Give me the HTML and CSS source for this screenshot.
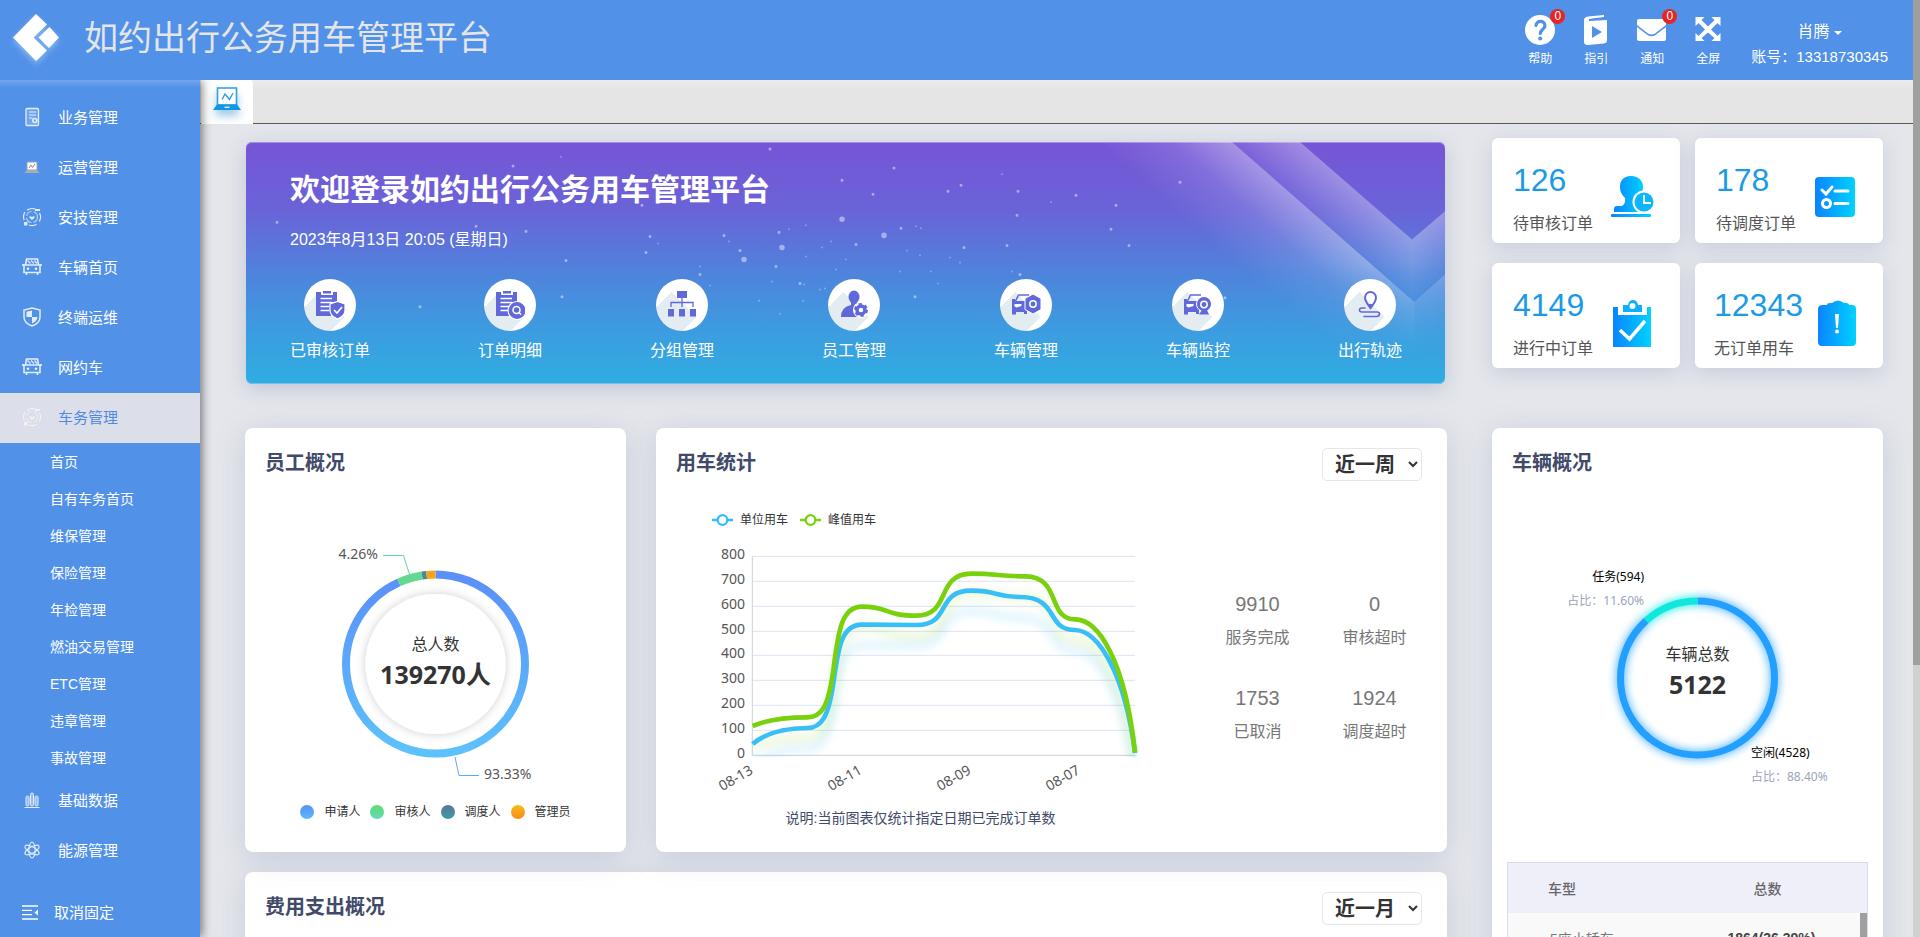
FILE: index.html
```html
<!DOCTYPE html>
<html lang="zh-CN">
<head>
<meta charset="utf-8">
<title>如约出行公务用车管理平台</title>
<link rel="stylesheet" href="styles.css">
</head>
<body>
<svg class="defs" width="0" height="0" aria-hidden="true">
  <defs>
    <linearGradient id="cyan" x1="0" y1="0" x2="1" y2="0"><stop offset="0" stop-color="#0a84ff"/><stop offset="1" stop-color="#00d2ff"/></linearGradient>
    <symbol id="i-car" viewBox="0 0 20 20"><path d="M4.500 2h11l1 6h-13zM2 8h16v7.500H2zM4.500 15.500V18M15.500 15.500V18M1 7v2M19 7v2" fill="none" stroke="currentColor" stroke-width="1.600"/><path d="M5.500 3.500l3 3M9 3.500l3 3M12.500 3.500l2.500 3" stroke="currentColor" stroke-width="1.200"/><circle cx="6" cy="11.800" r="1.300" fill="currentColor"/><circle cx="14" cy="11.800" r="1.300" fill="currentColor"/></symbol>
    <symbol id="i-orbit" viewBox="0 0 20 20"><g fill="none" stroke="currentColor" stroke-width="1.200"><path d="M5 3.200A8.500 8.500 0 0 1 15.500 3.600M17.500 6A8.500 8.500 0 0 1 17.300 14.500M14.500 17.300A8.500 8.500 0 0 1 7 18M2.200 13A8.500 8.500 0 0 1 3 5"/><circle cx="10" cy="10" r="5.500" stroke-dasharray="7 2" opacity=".7"/></g><path d="M10 13c-4-2.500-3-5 0-3 3-2 4 .5 0 3zM2 15h3.500v3.500H2z" fill="currentColor"/><path d="M13 2h5v2h-5z" fill="currentColor"/></symbol>
    <symbol id="i-clip" viewBox="0 0 30 30"><path d="M1 2h5v3h12V2h4v10h-6v14H1z" fill="#6169da"/><path d="M8 1h8v2.500H8z" fill="#6169da"/><path d="M5.500 8.500H17M5.500 12.500H17M5.500 16.500h9M5.500 20.500h9" stroke="#fff" stroke-width="1.300"/></symbol>
    <symbol id="i-suv" viewBox="0 0 30 30"><path d="M4.500 11l3-6H18M7 6.500L4.500 11" fill="none" stroke="#6169da" stroke-width="1.500"/><path d="M1 9h3v2h12v13h-3v-2H5v2.500H1z" fill="#6169da"/><path d="M3.500 14h7v2l-5 1.500-2-1z" fill="#fff"/></symbol>
  </defs>
</svg>
<div class="viewport">
<div class="app">
  <header class="topbar">
    <svg class="logo" viewBox="0 0 46 56" aria-hidden="true"><path d="M23 5L34 15.500 20.500 28.500 34 41.500 23 52 0 28.500z" fill="#fff"/><path d="M36.500 18L46 28.500 36 39 25.500 28.500z" fill="#fff"/></svg>
    <h1 class="brand">如约出行公务用车管理平台</h1>
    <nav class="tools" aria-label="工具">
      <button class="tool" type="button"><svg viewBox="0 0 30 30"><circle cx="15" cy="15" r="15" fill="#fff"/><path d="M11 10.500c0-5.500 9-5.500 9 0 0 4-4.700 4-4.700 8" fill="none" stroke="#5191e8" stroke-width="3.200" stroke-linecap="round"/><circle cx="15.200" cy="23.500" r="2" fill="#5191e8"/></svg><span class="badge">0</span><span>帮助</span></button>
      <button class="tool" type="button"><svg viewBox="0 0 30 30"><path d="M7 1.500L23 0v2L8 4v2l18-1v20q0 3-3 3.500L7 30q-4 0-4-3V5q0-3 4-3.500z" fill="#fff"/><path d="M8 5l14-1.600" stroke="#5191e8" stroke-width="1.500"/><path d="M11 11v12l10-6z" fill="#5191e8"/></svg><span>指引</span></button>
      <button class="tool" type="button"><svg viewBox="0 0 30 30"><path d="M0 10V6q0-2 2-2h25q2 0 2 2v4l-11 8.500q-3.500 2-7 0z" fill="#fff"/><path d="M0 12l10.500 8q4 2.500 8 0L29 12v12q0 2-2 2H2q-2 0-2-2z" fill="#fff"/></svg><span class="badge">0</span><span>通知</span></button>
      <button class="tool" type="button"><svg viewBox="0 0 30 30"><path d="M2.500 2h9L8.500 5l6.500 6.500L21.500 5l-3-3h9v9l-3-3L18 14.500l6.500 6.500 3-3v8h-9l3-3L15 17.500 8.500 23l3 3h-9v-8l3 3 6.500-6.500L5.500 8l-3 3z" fill="#fff"/></svg><span>全屏</span></button>
    </nav>
    <div class="user">
      <button class="user-name" type="button">肖腾 <span class="caret"></span></button>
      <div class="account">账号：13318730345</div>
    </div>
  </header>

  <div class="body">
    <aside class="sidebar">
      <a class="item" href="#"><svg viewBox="0 0 20 20"><rect x="4" y="1.500" width="12.500" height="17" rx="1" fill="#ffffff30" stroke="currentColor" stroke-width="1.300"/><path d="M7 5h7M7 8h7M7 11h3.500" stroke="currentColor"/><circle cx="12.800" cy="13.500" r="2" fill="none" stroke="currentColor" stroke-width="1.600"/></svg>业务管理</a>
      <a class="item" href="#"><svg viewBox="0 0 20 20"><path d="M5 5h10v8H5z" fill="#fff" stroke="#9aa0ae"/><path d="M7 11l2-3 1.500 2.500L13 7" fill="none" stroke="#8a90a0"/><path d="M5 13h10l2.500 3h-15z" fill="#a9abb5"/></svg>运营管理</a>
      <a class="item" href="#"><svg viewBox="0 0 20 20"><use href="#i-orbit"/></svg>安技管理</a>
      <a class="item" href="#"><svg viewBox="0 0 20 20"><use href="#i-car"/></svg>车辆首页</a>
      <a class="item" href="#"><svg viewBox="0 0 20 20"><path d="M10 1l8 2v7q0 6-8 9-8-3-8-9V3z" fill="none" stroke="currentColor" stroke-width="1.500"/><path d="M10 3.500V10H4.500V4.800zM10 10h5.500q-.5 4.500-5.500 6.500z" fill="currentColor"/></svg>终端运维</a>
      <a class="item" href="#"><svg viewBox="0 0 20 20"><use href="#i-car"/></svg>网约车</a>
      <a class="item active" href="#"><svg viewBox="0 0 20 20"><use href="#i-orbit"/></svg>车务管理</a>
      <a class="sub" href="#">首页</a>
      <a class="sub" href="#">自有车务首页</a>
      <a class="sub" href="#">维保管理</a>
      <a class="sub" href="#">保险管理</a>
      <a class="sub" href="#">年检管理</a>
      <a class="sub" href="#">燃油交易管理</a>
      <a class="sub" href="#">ETC管理</a>
      <a class="sub" href="#">违章管理</a>
      <a class="sub" href="#">事故管理</a>
      <a class="item" href="#"><svg viewBox="0 0 20 20"><g fill="#ffffff60" stroke="currentColor" stroke-width="1"><rect x="4" y="6" width="3" height="10" rx="1.500"/><rect x="8.500" y="3" width="3" height="13" rx="1.500"/><rect x="13" y="6" width="3" height="10" rx="1.500"/></g><path d="M2.500 17.500h15" stroke="currentColor"/></svg>基础数据</a>
      <a class="item" href="#"><svg viewBox="0 0 20 20"><g fill="none" stroke="currentColor" stroke-width="1.100"><ellipse cx="10" cy="10" rx="3.200" ry="8"/><ellipse cx="10" cy="10" rx="3.200" ry="8" transform="rotate(60 10 10)"/><ellipse cx="10" cy="10" rx="3.200" ry="8" transform="rotate(120 10 10)"/></g></svg>能源管理</a>
      <button class="unpin" type="button"><svg viewBox="0 0 20 20"><path d="M2 4h16M2 8.300h10M2 12.600h10M2 17h16" stroke="currentColor" stroke-width="1.300"/><path d="M18 7.500v6l-3.500-3z" fill="currentColor"/></svg>取消固定</button>
    </aside>

    <main class="main">
      <div class="tabs">
        <a class="tab" href="#" aria-label="首页"><svg viewBox="0 0 28 26"><path d="M4.500 1h19v17h-19z" fill="#fff" stroke="#2b9fe8" stroke-width="1.600"/><path d="M9 12.500l3-5.500 4.500 5.500L20 6" fill="none" stroke="#2b9fe8" stroke-width="1.400"/><path d="M4 17.500h20l4 5.500H0z" fill="#1196e6"/><path d="M11.500 20.300h5" stroke="#cfeaff" stroke-width="1.500"/></svg></a>
      </div>
      <div class="content">
        <div class="col-left">
          <section class="banner">
            <svg class="banner-art" viewBox="0 0 1199 241" preserveAspectRatio="none" aria-hidden="true">
              <defs>
                <linearGradient id="b1" gradientUnits="userSpaceOnUse" x1="1077" y1="79" x2="1018" y2="147"><stop offset="0" stop-color="#fff" stop-opacity=".36"/><stop offset=".45" stop-color="#fff" stop-opacity=".12"/><stop offset="1" stop-color="#fff" stop-opacity="0"/></linearGradient>
                <linearGradient id="b2" gradientUnits="userSpaceOnUse" x1="1168" y1="159" x2="1210" y2="208"><stop offset="0" stop-color="#fff" stop-opacity=".25"/><stop offset="1" stop-color="#fff" stop-opacity="0"/></linearGradient>
                <linearGradient id="b3" gradientUnits="userSpaceOnUse" x1="1110" y1="48" x2="1074" y2="90"><stop offset="0" stop-color="#fff" stop-opacity=".32"/><stop offset="1" stop-color="#fff" stop-opacity="0"/></linearGradient>
                <linearGradient id="b4" gradientUnits="userSpaceOnUse" x1="1166" y1="97" x2="1202" y2="139"><stop offset="0" stop-color="#fff" stop-opacity=".32"/><stop offset="1" stop-color="#fff" stop-opacity="0"/></linearGradient>
                <linearGradient id="fade" x1="0" y1="0" x2="0" y2="1"><stop offset=".5" stop-color="#fff"/><stop offset=".9" stop-color="#000"/></linearGradient>
                <mask id="low"><path d="M0 0h1199v241H0z" fill="url(#fade)"/></mask>
              </defs>
              <g mask="url(#low)">
                <path d="M860 0H986L1168 159V241H860z" fill="url(#b1)"/>
                <path d="M1168 159L1199 132V241H1168z" fill="url(#b1)" transform="matrix(-1 0 0 1 2336 0) matrix(-1 0 0 1 2336 0)" opacity="0"/>
                <path d="M1168 159L1199 132V241H1168z" fill="url(#b2)"/>
                <path d="M986 0H1054L1166 97V157z" fill="url(#b3)"/>
                <path d="M1166 97L1199 69V132L1166 159z" fill="url(#b4)"/>
              </g>
              <g stroke="#fff" stroke-linecap="round" fill="none">
                <path stroke-width="3" opacity=".45" d="M524 7h0M267 24h0M596 38h0M31 80h0M230 84h0M280 89h0M396 63h0M404 94h0M478 93h0M533 90h0M494 108h0M400 110h0M320 118h0M530 124h0M610 102h0M454 132h0M554 141h0M316 154h0M174 164h0M648 26h0M627 52h0M702 49h0M715 43h0M772 49h0M830 53h0M870 63h0M934 40h0M771 73h0M655 86h0M865 87h0M883 103h0M761 103h0M718 105h0M774 132h0M669 154h0M979 155h0"/>
                <path stroke-width="2" opacity=".3" d="M315 15h0M543 87h0M560 83h0M412 101h0M483 99h0M560 114h0M576 105h0M600 117h0M585 99h0M590 127h0M454 124h0M464 143h0M526 139h0M558 142h0M574 147h0M579 146h0M513 158h0M557 158h0M534 171h0M670 84h0M675 86h0M704 115h0M674 113h0M714 120h0M766 129h0M685 129h0M692 141h0M756 32h0M805 60h0M654 129h0M661 108h0"/>
                <path stroke-width="5.500" opacity=".45" d="M596 77h0M536 105h0M498 117h0M638 93h0"/>
              </g>
            </svg>
            <h2>欢迎登录如约出行公务用车管理平台</h2>
            <p class="date">2023年8月13日 20:05 (星期日)</p>
            <nav class="shortcuts">
              <a href="#"><span class="disc"><svg viewBox="0 0 30 30"><use href="#i-clip"/><path d="M22.500 11.500l7.500 2.500v6q0 6-7.500 9-7.500-3-7.500-9v-6z" fill="#6169da" stroke="#fff" stroke-width="1.200"/><path d="M19 20l3 3 5-6" fill="none" stroke="#fff" stroke-width="1.600"/></svg></span>已审核订单</a>
              <a href="#"><span class="disc"><svg viewBox="0 0 30 30"><use href="#i-clip"/><circle cx="22" cy="20.500" r="9" fill="#6169da" stroke="#fff" stroke-width="1.200"/><circle cx="21.500" cy="20" r="3.500" fill="none" stroke="#fff" stroke-width="1.500"/><path d="M24 22.500l2 2" stroke="#fff" stroke-width="1.600"/></svg></span>订单明细</a>
              <a href="#"><span class="disc"><svg viewBox="0 0 30 30"><path d="M10 1h10v7H10zM1 19h6v7.500H1zM12 19h6v7.500h-6zM23 19h6v7.500h-6z" fill="#6169da"/><path d="M15 8v9M4 17v-4.500h22V17" fill="none" stroke="#6169da" stroke-width="1.300"/></svg></span>分组管理</a>
              <a href="#"><span class="disc"><svg viewBox="0 0 30 30"><ellipse cx="15" cy="7" rx="5.500" ry="6.500" fill="#6169da"/><path d="M2 27q0-10 10-12v-3h6v3l3 2v10z" fill="#6169da"/><circle cx="22" cy="20" r="8" fill="#fff"/><circle cx="22" cy="20" r="4" fill="none" stroke="#6169da" stroke-width="3.500"/><circle cx="22" cy="20" r="6" fill="none" stroke="#6169da" stroke-width="2" stroke-dasharray="3.200 3.080"/></svg></span>员工管理</a>
              <a href="#"><span class="disc"><svg viewBox="0 0 30 30"><use href="#i-suv"/><path d="M22 4l8 4.500v11L22 24l-8-4.500v-11z" fill="#6169da" stroke="#fff"/><circle cx="22" cy="14" r="3.200" fill="none" stroke="#fff" stroke-width="1.500"/></svg></span>车辆管理</a>
              <a href="#"><span class="disc"><svg viewBox="0 0 30 30"><use href="#i-suv"/><circle cx="21" cy="14" r="7.500" fill="#6169da" stroke="#fff"/><path d="M19 20h5l2 4.500H16z" fill="#6169da"/><circle cx="21" cy="14.500" r="3.200" fill="none" stroke="#fff" stroke-width="1.500"/></svg></span>车辆监控</a>
              <a href="#"><span class="disc"><svg viewBox="0 0 30 30"><path d="M15.500 2a5.500 5.500 0 0 1 5.500 5.500q0 4-5.500 10.500Q10 11.500 10 7.500A5.500 5.500 0 0 1 15.500 2z" fill="none" stroke="#6169da" stroke-width="2"/><path d="M12.500 14h6l-3 5z" fill="#6169da"/><path d="M10 18H7q-2.500 0-2.500 2T7 22h15q2.500 0 2.500 2T22 26.500H9" fill="none" stroke="#6169da" stroke-width="1.600" stroke-linecap="round"/></svg></span>出行轨迹</a>
            </nav>
          </section>

          <div class="row">
            <section class="panel staff">
              <h3 class="panel-title">员工概况</h3>
              <svg class="chart" viewBox="0 0 381 300" role="img" aria-label="员工概况">
                <defs>
                  <linearGradient id="s1" x1="1" y1="0" x2="0" y2="0"><stop offset="0" stop-color="#5b8ff9"/><stop offset="1" stop-color="#5cc2fc"/></linearGradient>
                  <filter id="soft" x="-20%" y="-20%" width="140%" height="140%"><feDropShadow dx="0" dy="0" stdDeviation="5" flood-color="#000" flood-opacity=".2"/></filter>
                </defs>
                <circle cx="190.500" cy="168" r="70" fill="#fff" filter="url(#soft)"/>
                <g fill="none" stroke-width="8" transform="rotate(-90 190.500 168)">
                  <circle cx="190.500" cy="168" r="89.500" pathLength="1000" stroke="url(#s1)" stroke-dasharray="933 1000"/>
                  <circle cx="190.500" cy="168" r="89.500" pathLength="1000" stroke="#62d990" stroke-dasharray="43 1000" stroke-dashoffset="-933"/>
                  <circle cx="190.500" cy="168" r="89.500" pathLength="1000" stroke="#4b869b" stroke-dasharray="8 1000" stroke-dashoffset="-976"/>
                  <circle cx="190.500" cy="168" r="89.500" pathLength="1000" stroke="#f6a51b" stroke-dasharray="16 1000" stroke-dashoffset="-984"/>
                </g>
                <path d="M138 59.500h20.500l6 19" fill="none" stroke="#62d9a0"/>
                <path d="M210 261l4 18.500h20" fill="none" stroke="#5cabfa"/>
                <text class="t14" x="133" y="63" text-anchor="end">4.26%</text>
                <text class="t14" x="239" y="283">93.33%</text>
                <text class="t16" x="190.500" y="154" text-anchor="middle">总人数</text>
                <text class="t25" x="190.500" y="188" text-anchor="middle">139270人</text>
              </svg>
              <ul class="legend">
                <li><i class="dot d1"></i>申请人</li><li><i class="dot d2"></i>审核人</li><li><i class="dot d3"></i>调度人</li><li><i class="dot d4"></i>管理员</li>
              </ul>
            </section>

            <section class="panel usage">
              <div class="panel-head">
                <h3 class="panel-title">用车统计</h3>
                <select class="range" aria-label="用车统计范围"><option>近一周</option><option>近一月</option></select>
              </div>
              <div class="usage-body">
                <div class="usage-chart">
                  <ul class="line-legend">
                    <li><svg viewBox="0 0 21 14"><path d="M0 7h21" stroke="#38bcfa" stroke-width="2.500"/><circle cx="10.500" cy="7" r="4.800" fill="#fff" stroke="#38bcfa" stroke-width="2.300"/></svg>单位用车</li>
                    <li><svg viewBox="0 0 21 14"><path d="M0 7h21" stroke="#7bd10d" stroke-width="2.500"/><circle cx="10.500" cy="7" r="4.800" fill="#fff" stroke="#7bd10d" stroke-width="2.300"/></svg>峰值用车</li>
                  </ul>
                  <svg class="chart" viewBox="0 0 543 262" role="img" aria-label="用车统计">
                    <defs>
                      <path id="pg" d="M308 918C350 900 410 892 472 892C515 892 535 860 550 750C565 630 575 560 636 560C720 560 700 587 800 587C905 587 855 461 964 461C1045 461 1045 469 1127 469C1235 471 1190 597 1275 598C1345 598 1425 720 1455 997"/>
                      <path id="pb" d="M308 972C350 935 410 925 472 924C515 924 535 890 550 790C565 680 575 614 636 614L800 615C905 615 855 512 964 512C1045 512 1035 531 1110 531C1230 531 1185 630 1275 630C1345 632 1425 760 1455 999"/>
                      <filter id="blur" x="-10%" y="-20%" width="120%" height="140%"><feGaussianBlur stdDeviation="12"/></filter>
                      <clipPath id="plot"><path d="M300 380h1164v632H300z"/></clipPath>
                    </defs>
                    <g transform="translate(-6 -114) scale(.33333)" fill="none">
                      <path d="M307 409h1148M307 484h1148M307 559h1148M307 634h1148M307 706h1148M307 781h1148M307 856h1148M307 931h1148" stroke="#dde3f0" stroke-width="3"/>
                      <path d="M307 409v597h1150" stroke="#cfd2d8" stroke-width="3"/>
                      <g clip-path="url(#plot)" stroke-width="22">
                        <use href="#pb" transform="translate(0 62)" stroke="#38bcfa" opacity=".17" filter="url(#blur)"/>
                        <use href="#pg" transform="translate(0 62)" stroke="#9bdc40" opacity=".2" filter="url(#blur)"/>
                      </g>
                      <use href="#pb" stroke="#38bff5" stroke-width="14"/>
                      <use href="#pg" stroke="#79d10e" stroke-width="14"/>
                    </g>
                    <g class="t14" text-anchor="end">
                      <text x="89" y="25">800</text><text x="89" y="50">700</text><text x="89" y="75">600</text><text x="89" y="100">500</text><text x="89" y="124">400</text><text x="89" y="149">300</text><text x="89" y="174">200</text><text x="89" y="199">100</text><text x="89" y="224">0</text>
                      <text transform="translate(98 239) rotate(-30)">08-13</text>
                      <text transform="translate(207 239) rotate(-30)">08-11</text>
                      <text transform="translate(316 239) rotate(-30)">08-09</text>
                      <text transform="translate(425 239) rotate(-30)">08-07</text>
                    </g>
                  </svg>
                  <p class="note">说明:当前图表仅统计指定日期已完成订单数</p>
                </div>
                <dl class="figures">
                  <div><dd>9910</dd><dt>服务完成</dt></div>
                  <div><dd>0</dd><dt>审核超时</dt></div>
                  <div><dd>1753</dd><dt>已取消</dt></div>
                  <div><dd>1924</dd><dt>调度超时</dt></div>
                </dl>
              </div>
            </section>
          </div>

          <section class="panel cost">
            <div class="panel-head">
              <h3 class="panel-title">费用支出概况</h3>
              <select class="range" aria-label="费用支出范围"><option>近一月</option><option>近一周</option></select>
            </div>
          </section>
        </div>

        <div class="col-right">
          <div class="cards">
            <a class="card" href="#"><span><b>126</b>待审核订单</span><svg viewBox="0 0 44 48"><path d="M21 1c8 0 12 5 12 11 0 3-1 4-1 6-7 2-10 10-6 17h5q2 1 2 2H4v-3q0-3 3-3h5q4-3 3-8c-3-3-5-6-5-11C10 6 13 1 21 1z" fill="url(#cyan)"/><rect x="1" y="39" width="40" height="3" rx="1" fill="url(#cyan)"/><circle cx="34" cy="27" r="10.500" fill="#0cb6ff" stroke="#fff" stroke-width="2"/><path d="M34 20v8h7" fill="none" stroke="#fff" stroke-width="1.800"/></svg></a>
            <a class="card" href="#"><span><b>178</b>待调度订单</span><svg viewBox="0 0 44 48"><rect x="2" y="2" width="40" height="40" rx="4" fill="url(#cyan)"/><path d="M9 15l4 4 6-7M22 16h13M22 28.500h13" fill="none" stroke="#fff" stroke-width="3" stroke-linecap="round"/><circle cx="13.500" cy="28.500" r="4" fill="none" stroke="#fff" stroke-width="3"/></svg></a>
            <a class="card" href="#"><span><b>4149</b>进行中订单</span><svg viewBox="0 0 44 48"><path d="M3 7h5v8h29V7h4v40H3z" fill="url(#cyan)"/><path d="M13 5h5q1-5 5-5t5 5h4v7H13z" fill="#0cb0ff"/><circle cx="22.500" cy="6" r="3" fill="#fff"/><path d="M10 30l9.500 9L35 21" fill="none" stroke="#fff" stroke-width="3.500"/></svg></a>
            <a class="card" href="#"><span><b>12343</b>无订单用车</span><svg viewBox="0 0 44 48"><path d="M7 5h4q0-2 3-2h2q6-5 12 0h2q3 0 3 2h3q4 0 4 4v33q0 4-4 4H6q-4 0-4-4V9q0-4 5-4z" fill="url(#cyan)"/><path d="M19 14h4l-1 14h-2z" fill="#fff"/><circle cx="21" cy="31.500" r="2" fill="#fff"/></svg></a>
          </div>
          <section class="panel vehicles">
            <h3 class="panel-title">车辆概况</h3>
            <svg class="chart" viewBox="0 0 391 366" role="img" aria-label="车辆概况">
              <defs><filter id="glow" x="-30%" y="-30%" width="160%" height="160%"><feGaussianBlur stdDeviation="5"/></filter></defs>
              <g fill="none" stroke-width="7" transform="rotate(-90 205.500 182)">
                <g filter="url(#glow)">
                  <circle cx="205.500" cy="182" r="77" pathLength="1000" stroke="#239fff" stroke-dasharray="884 1000"/>
                  <circle cx="205.500" cy="182" r="77" pathLength="1000" stroke="#10e8de" stroke-dasharray="116 1000" stroke-dashoffset="-884"/>
                </g>
                <circle cx="205.500" cy="182" r="77" pathLength="1000" stroke="#239fff" stroke-dasharray="884 1000"/>
                <circle cx="205.500" cy="182" r="77" pathLength="1000" stroke="#10e8de" stroke-dasharray="116 1000" stroke-dashoffset="-884"/>
              </g>
              <text class="t12" x="152" y="85" text-anchor="end">任务(594)</text>
              <text class="t12 mute" x="152" y="109" text-anchor="end">占比：11.60%</text>
              <text class="t12" x="259" y="261">空闲(4528)</text>
              <text class="t12 mute" x="259" y="285">占比：88.40%</text>
              <text class="t16" x="205.500" y="164" text-anchor="middle">车辆总数</text>
              <text class="t25" x="205.500" y="198" text-anchor="middle">5122</text>
            </svg>
            <div class="table-wrap">
              <table>
                <thead><tr><th>车型</th><th>总数</th></tr></thead>
                <tbody><tr><td>5座小轿车</td><td>1864(36.39%)</td></tr></tbody>
              </table>
              <span class="table-thumb"></span>
            </div>
          </section>
        </div>
      </div>
    </main>
  </div>
</div>
<div class="scrollbar"><div class="thumb"></div></div>
</div>
</body>
</html>
```
FILE: styles.css
```css
* { box-sizing: border-box; }
body { margin: 0; font-family: "Liberation Sans", "Noto Sans CJK SC", sans-serif; font-size: 14px; color: #333; }
h1, h2, h3, p, ul, dl, dd { margin: 0; padding: 0; }
ul { list-style: none; }
a { color: inherit; text-decoration: none; }
button { font: inherit; color: inherit; background: none; border: 0; padding: 0; cursor: pointer; }
.defs { position: absolute; }

.viewport { display: grid; grid-template-columns: minmax(0, 1fr) 7px; height: 100vh; overflow: hidden; }
.app { display: flex; flex-direction: column; min-height: 0; overflow: hidden; }
.scrollbar { background: #d0d0d0; }
.thumb { height: 71%; background: #9f9f9f; }

.topbar { display: flex; align-items: flex-start; flex: none; height: 80px; padding: 0 25px 0 13px; background: #5191e8; color: #fff; }
.logo { width: 46px; height: 56px; margin-top: 9px; filter: drop-shadow(0 3px 3px rgba(255, 255, 255, .35)); }
.brand { flex: 1; margin-left: 25px; font-size: 34px; font-weight: 400; line-height: 76px; color: #e4e5e7; white-space: nowrap; }
.tools { display: flex; margin-right: 15px; }
.tool { position: relative; display: flex; flex-direction: column; align-items: center; width: 56px; padding-top: 15px; font-size: 12px; line-height: 18px; }
.tool svg { width: 30px; height: 30px; margin-bottom: 5px; }
.badge { position: absolute; left: 38px; top: 9px; width: 15px; height: 15px; border-radius: 50%; background: #e82424; line-height: 14px; }
.user { padding-top: 19px; text-align: center; font-size: 15px; line-height: 25px; }
.user-name { font-size: 16px; line-height: 25px; }
.caret { display: inline-block; vertical-align: middle; border: 4px solid transparent; border-top-color: #fff; border-bottom: 0; }

.body { display: flex; flex: 1; min-height: 0; }
.sidebar { position: relative; z-index: 1; display: flex; flex-direction: column; flex: 0 0 200px; padding-top: 13px; background: linear-gradient(#72a6ee, #5191e8 8px); color: #fff; box-shadow: 2px 0 9px rgba(0, 0, 0, .5); clip-path: inset(0 -14px 0 0); }
.item { display: flex; align-items: center; flex: none; height: 50px; padding: 0 0 3px 22px; font-size: 15px; }
.item svg { width: 20px; height: 20px; margin-right: 16px; color: #e3edfc; }
.item.active { background: #dcdfe9; color: #4e8be0; }
.item.active svg { color: #f4f1f1; }
.sub { flex: none; height: 37px; padding: 1px 0 0 50px; line-height: 36px; }
.unpin { display: flex; align-items: center; height: 48px; margin-top: auto; padding: 0 0 3px 20px; font-size: 15px; }
.unpin svg { width: 20px; height: 20px; margin-right: 14px; }

.main { flex: 1; min-width: 0; background: #e4e6eb; }
.tabs { height: 44px; padding-left: 1px; background: linear-gradient(#ececec, #e5e5e5 10px); border-bottom: 1px solid #555d55; }
.tab { display: flex; justify-content: center; width: 52px; height: 44px; padding-top: 7px; background: #fff; border-radius: 0 3px 0 0; }
.tab svg { width: 28px; height: 26px; filter: drop-shadow(0 6px 4px rgba(60, 150, 200, .5)); }

.content { display: grid; grid-template-columns: minmax(0, 1202fr) minmax(0, 391fr); gap: 45px; align-items: start; padding: 14px 30px 0 45px; }
.banner { position: relative; margin: 4px 2px 44px 1px; padding: 28px 43px 22px 44px; border-radius: 6px; overflow: hidden; color: #fff; background: linear-gradient(#7655d6, #6a63d8 28%, #4f83dc 54%, #3b9ee0 80%, #2fade1); box-shadow: 0 5px 20px rgba(110, 125, 165, .3), inset 0 1px #a48fe0, inset 0 -1px #6fc4e8; }
.banner-art { position: absolute; inset: 0; width: 100%; height: 100%; }
.banner h2 { position: relative; font-size: 30px; line-height: 40px; }
.date { position: relative; margin-top: 18px; font-size: 16px; line-height: 24px; }
.shortcuts { position: relative; display: flex; justify-content: space-between; margin-top: 27px; font-size: 16px; line-height: 22px; }
.shortcuts a { display: flex; flex-direction: column; align-items: center; gap: 9px; }
.disc { display: grid; place-items: center; width: 52px; height: 52px; border-radius: 50%; background: linear-gradient(45deg, transparent 52%, #fff 52%), linear-gradient(135deg, #fff 27%, #e3ecf0 27% 75%, #fff 75%); }
.disc svg { width: 30px; height: 30px; }

.row { display: grid; grid-template-columns: 381fr 791fr; gap: 30px; margin-bottom: 20px; }
.panel { background: #fff; border-radius: 8px; box-shadow: 0 5px 28px rgba(125, 140, 180, .28); }
.panel-title { padding: 20px 20px 18px; font-size: 20px; line-height: 30px; color: #414a69; }
.panel-head { display: flex; justify-content: space-between; align-items: flex-start; height: 68px; padding-right: 25px; }
.range { width: 100px; height: 33px; margin-top: 20px; padding: 0 0 0 8px; border: 1px solid #e6e6e6; border-radius: 5px; background: #fff; color: #333; font: bold 20px "Liberation Sans", "Noto Sans CJK SC", sans-serif; }
.chart { display: block; width: 100%; height: auto; font-family: "Noto Sans", "Noto Sans CJK SC", sans-serif; fill: #333; }
.t12 { font-size: 12px; fill: #000; }
.t14 { font-size: 14px; fill: #555; }
.t16 { font-size: 16px; fill: #333; }
.t25 { font-size: 25px; font-weight: 700; fill: #333; }
.mute { fill: #9aa5bd; }

.legend { display: flex; justify-content: center; gap: 10px; padding-bottom: 24px; font-size: 12px; line-height: 32px; }
.legend li { display: flex; align-items: center; gap: 10px; }
.dot { width: 14px; height: 14px; border-radius: 50%; }
.d1 { background: linear-gradient(#5b8ff9, #5cbafb); }
.d2 { background: linear-gradient(#5fd975, #62dcb0); }
.d3 { background: linear-gradient(#6072a0, #3b9ea0); }
.d4 { background: linear-gradient(#f5bb1c, #fb8b15); }

.usage-body { display: flex; padding-right: 14px; }
.usage-chart { flex: 1; }
.line-legend { display: flex; gap: 12px; padding: 12px 0 2px 56px; font-size: 12px; line-height: 24px; }
.line-legend li { display: flex; align-items: center; gap: 7px; }
.line-legend svg { width: 21px; height: 14px; }
.note { padding: 10px 14px 22px 0; text-align: center; font-size: 14px; line-height: 24px; color: #414a69; }
.figures { display: grid; grid-template-columns: 1fr 1fr; align-content: start; row-gap: 36px; flex: 0 0 234px; padding-top: 96px; text-align: center; color: #777; font-size: 16px; line-height: 24px; }
.figures dd { margin-bottom: 10px; font-size: 20px; }
.cost { height: 424px; }

.cards { display: grid; grid-template-columns: 1fr 1fr; gap: 20px 15px; margin-bottom: 60px; }
.card { display: flex; align-items: center; padding: 24px 0 7px 21px; background: #fff; border-radius: 6px; box-shadow: 0 5px 20px rgba(125, 140, 180, .28); color: #555; font-size: 16px; line-height: 24px; }
.card span { flex: 0 0 97px; }
.card:nth-child(4) { padding-left: 19px; }
.card:nth-child(4) span { flex-basis: 102px; }
.card b { display: block; margin-bottom: 14px; font-size: 32px; font-weight: 400; line-height: 36px; color: #1c9ae8; }
.card svg { width: 44px; height: 48px; }

.table-wrap { position: relative; height: 200px; margin: 0 15px; border: 1px solid #d9dbea; }
table { width: 100%; border-collapse: collapse; table-layout: fixed; font-size: 14px; }
th, td { height: 50px; padding: 0; }
th { background: #efeffa; color: #666; font-weight: 500; }
th:first-child, td:first-child { width: 44%; padding-left: 40px; text-align: left; }
td:first-child { padding-left: 42px; }
td { background: #f9f9f9; color: #777; }
th:last-child { padding-left: 2px; }
td:last-child { padding-left: 10px; text-align: center; font-weight: 700; color: #444; }
.table-thumb { position: absolute; right: 0; top: 50px; width: 7px; height: 100px; background: #9f9f9f; }
```
